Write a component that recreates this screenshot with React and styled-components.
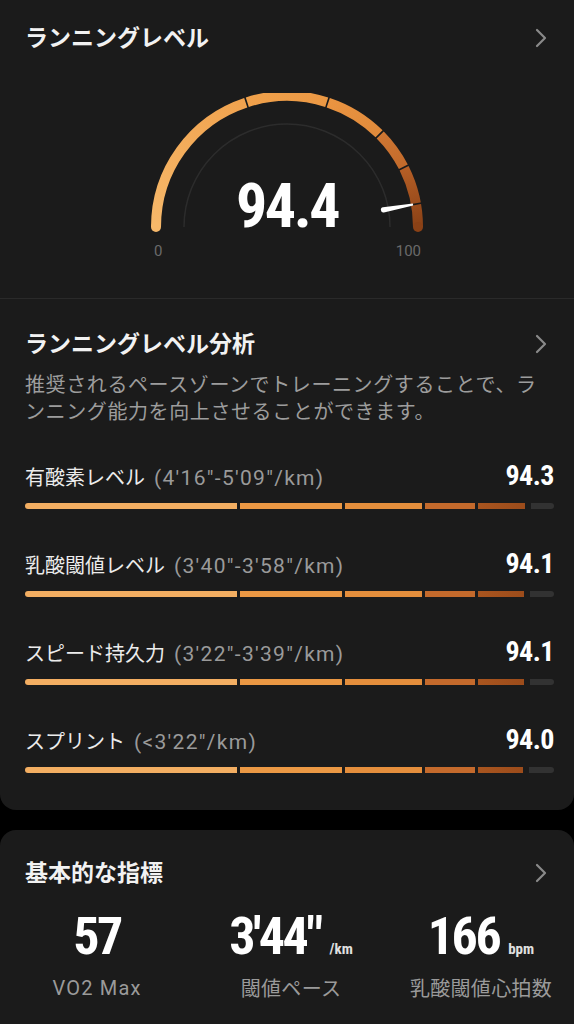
import React from "react";
import styled, { createGlobalStyle } from "styled-components";

const Global = createGlobalStyle`
  html, body { margin: 0; padding: 0; background: #000; }
  body {
    font-family: "Noto Sans CJK JP", "Noto Sans", sans-serif;
    -webkit-font-smoothing: antialiased;
  }
`;

const NUM_FONT = `"Liberation Sans Narrow", "Roboto Condensed", "DejaVu Sans Condensed", Roboto, sans-serif`;
const CARD_BG = "#1b1b1b";

const Page = styled.div`
  width: 574px;
  min-height: 1024px;
  display: flex;
  flex-direction: column;
  gap: 20px;
  background: #000;
  overflow: hidden;
`;

const Card = styled.section`
  background: ${CARD_BG};
  border-radius: ${(p) => (p.$bottomRounded ? "0 0 16px 16px" : "16px 16px 0 0")};
  padding-bottom: ${(p) => (p.$bottomRounded ? "0" : "60px")};
`;

const Section = styled.div`
  padding: ${(p) => p.$pad};
`;

const Header = styled.div`
  display: flex;
  align-items: center;
  justify-content: space-between;
  height: 32px;
  padding: 0 27px 0 25px;
`;

const Title = styled.h2`
  margin: 0;
  padding-bottom: 4px;
  font-size: 23px;
  line-height: 32px;
  font-weight: 700;
  color: #f2f2f2;
`;

const ChevronSvg = styled.svg`
  display: block;
  flex: none;
`;

const Chevron = () => (
  <ChevronSvg viewBox="0 0 12 20" width="12" height="20">
    <path
      d="M2 2 L10 10 L2 18"
      fill="none"
      stroke="#8a8a8a"
      strokeWidth="2.2"
      strokeLinecap="round"
      strokeLinejoin="round"
    />
  </ChevronSvg>
);

/* ---------- Gauge ---------- */
const GaugeBox = styled.div`
  position: relative;
  width: 290px;
  height: 142px;
  margin: 39px auto 0;
`;

const GaugeSvg = styled.svg`
  display: block;
`;

const GaugeValue = styled.div`
  position: absolute;
  left: 0;
  right: 0;
  top: 82px;
  text-align: center;
  font-family: ${NUM_FONT};
  font-weight: 700;
  font-size: 62px;
  line-height: 62px;
  letter-spacing: -2.5px;
  color: #fff;
`;

const ScaleRow = styled.div`
  width: 272px;
  margin: 6px auto 0;
  padding: 0 2px 0 3px;
  box-sizing: border-box;
  display: flex;
  justify-content: space-between;
  font-family: Roboto, sans-serif;
  font-size: 15px;
  line-height: 20px;
  color: #6a6a6a;
`;

const Divider = styled.div`
  height: 1px;
  background: #2a2a2a;
`;

const CX = 145;
const CY = 134;
const R = 131;
const pt = (f, r = R) => {
  const a = ((180 - f * 180) * Math.PI) / 180;
  return [CX + r * Math.cos(a), CY - r * Math.sin(a)];
};

const ZONES = [
  { from: 0, to: 0.4, c0: "#f6b86a", c1: "#f0a24e" },
  { from: 0.4, to: 0.6, c0: "#f0a14b", c1: "#eb9844" },
  { from: 0.6, to: 0.75, c0: "#ea9441", c1: "#e08a3b" },
  { from: 0.75, to: 0.85, c0: "#cf7733", c1: "#c26a2b" },
  { from: 0.85, to: 1, c0: "#b65f26", c1: "#8a4116" },
];

const Gauge = ({ value }) => {
  const gap = 0.004;
  const f = value / 100;
  const angle = 180 - f * 180;
  const [t0x, t0y] = pt(f, R - 6);
  const [t1x, t1y] = pt(f, R + 6);
  return (
    <GaugeSvg width="290" height="142" viewBox="0 0 290 142">
      <defs>
        {ZONES.map((z, i) => {
          const [x0, y0] = pt(z.from);
          const [x1, y1] = pt(z.to);
          return (
            <linearGradient
              key={i}
              id={`zg${i}`}
              gradientUnits="userSpaceOnUse"
              x1={x0}
              y1={y0}
              x2={x1}
              y2={y1}
            >
              <stop offset="0" stopColor={z.c0} />
              <stop offset="1" stopColor={z.c1} />
            </linearGradient>
          );
        })}
      </defs>
      <path
        d={`M ${CX - 103} ${CY} A 103 103 0 0 1 ${CX + 103} ${CY}`}
        fill="none"
        stroke="#2c2c2c"
        strokeWidth="1.5"
      />
      {ZONES.map((z, i) => {
        const a = i === 0 ? 0 : z.from + gap / 2;
        const b = i === ZONES.length - 1 ? 1 : z.to - gap / 2;
        const [x0, y0] = pt(a);
        const [x1, y1] = pt(b);
        return (
          <path
            key={i}
            d={`M ${x0} ${y0} A ${R} ${R} 0 0 1 ${x1} ${y1}`}
            fill="none"
            stroke={`url(#zg${i})`}
            strokeWidth="10"
          />
        );
      })}
      <circle cx={CX - R} cy={CY} r="5" fill="#f6b86a" />
      <circle cx={CX + R} cy={CY} r="5" fill="#8a4116" />
      <line x1={t0x} y1={t0y} x2={t1x} y2={t1y} stroke={CARD_BG} strokeWidth="1.6" />
      <path
        d="M 98 -2.6 L 128 -1 L 128 1 L 98 2.6 A 2.6 2.6 0 0 1 98 -2.6 Z"
        fill="#fff"
        transform={`translate(${CX} ${CY}) rotate(${-angle})`}
      />
    </GaugeSvg>
  );
};

/* ---------- Analysis ---------- */
const Description = styled.p`
  margin: 10px 25px 0;
  font-size: 20px;
  line-height: 27px;
  letter-spacing: 0.6px;
  color: #9d9d9d;
`;

const RowList = styled.div`
  display: flex;
  flex-direction: column;
  gap: 41px;
  margin-top: 38px;
`;

const Row = styled.div`
  display: flex;
  flex-direction: column;
`;

const RowHead = styled.div`
  display: flex;
  align-items: baseline;
  justify-content: space-between;
  height: 28px;
  padding: 0 20px 0 25px;
`;

const RowLabel = styled.span`
  font-size: 20px;
  line-height: 28px;
  color: #ececec;
`;

const Pace = styled.span`
  margin-left: 9px;
  font-family: Roboto, sans-serif;
  font-size: 21px;
  letter-spacing: 1.3px;
  color: #9a9a9a;
`;

const RowValue = styled.span`
  font-family: ${NUM_FONT};
  font-weight: 700;
  font-size: 28px;
  line-height: 28px;
  letter-spacing: -0.5px;
  color: #fff;
`;

const Bar = styled.div`
  display: flex;
  height: 6px;
  margin: 13px 20px 0 25px;
`;

const Segment = styled.div`
  flex: 0 0 ${(p) => p.$w}%;
  box-sizing: border-box;
  background: ${(p) => p.$c};
  background-clip: padding-box;
  border-left: ${(p) => (p.$first ? "0" : `3.5px solid ${CARD_BG}`)};
  border-radius: ${(p) => (p.$first ? "3px 0 0 3px" : "0")};
`;

const LastSegment = styled.div`
  flex: 1;
  display: flex;
  box-sizing: border-box;
  border-left: 3.5px solid ${CARD_BG};
`;

const Fill = styled.div`
  background: linear-gradient(90deg, #a9551f, #9c4c1b);
`;

const Track = styled.div`
  flex: 1;
  margin-left: 6px;
  background: #323232;
  border-radius: 0 3px 3px 0;
`;

const SEGS = [
  { w: 40, c: "#f3ae62" },
  { w: 20, c: "#eb9844" },
  { w: 15, c: "#e48e3c" },
  { w: 10, c: "#c46a2c" },
];

const LevelBar = ({ value }) => {
  const frac = Math.max(0, Math.min(1, (value / 100 - 0.85) / 0.15));
  return (
    <Bar>
      {SEGS.map((s, i) => (
        <Segment key={i} $w={s.w} $c={s.c} $first={i === 0} />
      ))}
      <LastSegment>
        <Fill style={{ width: `${frac * 100}%` }} />
        <Track />
      </LastSegment>
    </Bar>
  );
};

const ROWS = [
  { label: "有酸素レベル", pace: `(4'16"-5'09"/km)`, value: "94.3" },
  { label: "乳酸閾値レベル", pace: `(3'40"-3'58"/km)`, value: "94.1" },
  { label: "スピード持久力", pace: `(3'22"-3'39"/km)`, value: "94.1" },
  { label: "スプリント", pace: `(<3'22"/km)`, value: "94.0" },
];

/* ---------- Stats ---------- */
const StatGrid = styled.div`
  display: grid;
  grid-template-columns: 194px 194px 1fr;
  margin-top: 20px;
`;

const StatCell = styled.div`
  display: flex;
  flex-direction: column;
  align-items: center;
`;

const StatValue = styled.div`
  display: flex;
  align-items: baseline;
  height: 56px;
`;

const StatNumber = styled.span`
  font-family: ${NUM_FONT};
  font-weight: 700;
  font-size: 52px;
  line-height: 56px;
  letter-spacing: -2.5px;
  color: #fff;
`;

const StatUnit = styled.span`
  margin-left: 9px;
  font-family: ${NUM_FONT};
  font-weight: 700;
  font-size: 15px;
  color: #e0e0e0;
`;

const StatLabel = styled.div`
  margin-top: 9px;
  font-size: 20px;
  line-height: 28px;
  color: #9a9a9a;
  letter-spacing: ${(p) => (p.$latin ? "1.2px" : "0.3px")};
  font-family: ${(p) => (p.$latin ? "Roboto, sans-serif" : "inherit")};
`;

const STATS = [
  { value: "57", unit: "", label: "VO2 Max", latin: true },
  { value: `3'44"`, unit: "/km", label: "閾値ペース" },
  { value: "166", unit: "bpm", label: "乳酸閾値心拍数" },
];

export default function App() {
  return (
    <>
      <Global />
      <Page>
        <Card $bottomRounded>
          <Section $pad="22px 0 37px">
            <Header>
              <Title>ランニングレベル</Title>
              <Chevron />
            </Header>
            <GaugeBox>
              <Gauge value={94.4} />
              <GaugeValue>94.4</GaugeValue>
            </GaugeBox>
            <ScaleRow>
              <span>0</span>
              <span>100</span>
            </ScaleRow>
          </Section>
          <Divider />
          <Section $pad="29px 0 37px">
            <Header>
              <Title>ランニングレベル分析</Title>
              <Chevron />
            </Header>
            <Description>
              推奨されるペースゾーンでトレーニングすることで、ランニング能力を向上させることができます。
            </Description>
            <RowList>
              {ROWS.map((r) => (
                <Row key={r.label}>
                  <RowHead>
                    <RowLabel>
                      {r.label}
                      <Pace>{r.pace}</Pace>
                    </RowLabel>
                    <RowValue>{r.value}</RowValue>
                  </RowHead>
                  <LevelBar value={parseFloat(r.value)} />
                </Row>
              ))}
            </RowList>
          </Section>
        </Card>
        <Card>
          <Section $pad="27px 0 0">
            <Header>
              <Title>基本的な指標</Title>
              <Chevron />
            </Header>
            <StatGrid>
              {STATS.map((s) => (
                <StatCell key={s.label}>
                  <StatValue>
                    <StatNumber>{s.value}</StatNumber>
                    {s.unit && <StatUnit>{s.unit}</StatUnit>}
                  </StatValue>
                  <StatLabel $latin={s.latin}>{s.label}</StatLabel>
                </StatCell>
              ))}
            </StatGrid>
          </Section>
        </Card>
      </Page>
    </>
  );
}
